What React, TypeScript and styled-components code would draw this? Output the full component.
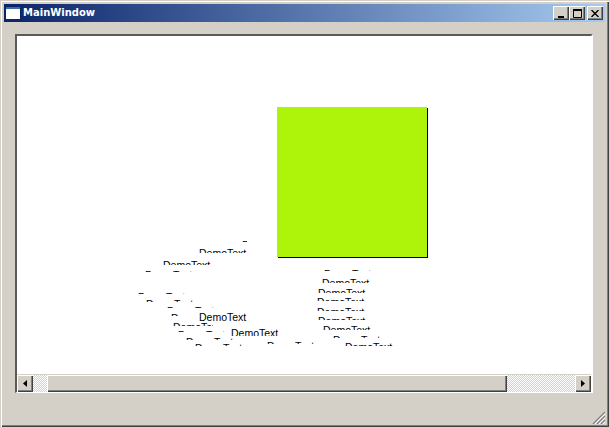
import * as React from 'react'
import styled, { createGlobalStyle } from 'styled-components'

const GlobalStyle = createGlobalStyle`
  html, body {
    margin: 0;
    padding: 0;
    background: #d4d0c8;
  }
`

interface Label {
  x: number
  y: number
  rows: number
  w?: number
}

// x, y = page position of the top of the capitals, rows = how much of the glyphs is left visible
const labels: Label[] = [
  { x: 242, y: 241, rows: 1, w: 5 },
  { x: 199, y: 249, rows: 4 },
  { x: 163, y: 261, rows: 4 },
  { x: 145, y: 271, rows: 1 },
  { x: 138, y: 293, rows: 1 },
  { x: 146, y: 300, rows: 2 },
  { x: 167, y: 307, rows: 1 },
  { x: 171, y: 314, rows: 2 },
  { x: 173, y: 323, rows: 3, w: 40 },
  { x: 199, y: 313, rows: 10 },
  { x: 178, y: 331, rows: 1 },
  { x: 231, y: 329, rows: 7 },
  { x: 186, y: 338, rows: 2 },
  { x: 195, y: 344, rows: 2 },
  { x: 267, y: 342, rows: 2 },
  { x: 324, y: 270, rows: 1 },
  { x: 322, y: 279, rows: 4 },
  { x: 318, y: 289, rows: 4 },
  { x: 317, y: 298, rows: 3 },
  { x: 317, y: 308, rows: 3 },
  { x: 318, y: 317, rows: 3 },
  { x: 323, y: 326, rows: 4 },
  { x: 333, y: 336, rows: 2 },
  { x: 345, y: 343, rows: 3 },
]

const Desktop = styled.div`
  width: 609px;
  height: 427px;
  box-sizing: border-box;
  display: flex;
  flex-direction: column;
  padding: 4px 4px 3px 4px;
  background: #d4d0c8;
  box-shadow: inset 1px 1px 0 #d4d0c8, inset 2px 2px 0 #fff, inset -1px -1px 0 #404040, inset -2px -2px 0 #808080;
  overflow: hidden;
`

const TitleBar = styled.div`
  height: 18px;
  flex: none;
  display: flex;
  align-items: center;
  padding: 0 2px 0 1px;
  background: linear-gradient(90deg, #0a246a 0%, #a6caf0 100%);
`

const AppIcon = styled.svg`
  width: 16px;
  height: 16px;
  flex: none;
  margin-right: 2px;
`

const Title = styled.span`
  flex: 1;
  font: bold 10px "DejaVu Sans", sans-serif;
  color: #fff;
  line-height: 18px;
`

const CaptionButton = styled.button<{ $gap?: number }>`
  width: 16px;
  height: 14px;
  padding: 0;
  margin-left: ${p => p.$gap ?? 0}px;
  background: #d4d0c8;
  border: 0;
  box-shadow: inset 1px 1px 0 #fff, inset -1px -1px 0 #404040, inset -2px -2px 0 #808080;
  display: flex;
  align-items: center;
  justify-content: center;
`

const ScrollArea = styled.div`
  margin: 12px 0 0 11px;
  width: 578px;
  height: 359px;
  flex: none;
  box-sizing: border-box;
  display: flex;
  flex-direction: column;
  background: #fff;
  border-top: 2px solid #5a5a5a;
  border-left: 2px solid #5a5a5a;
  border-right: 2px solid #fff;
  border-bottom: 1px solid #fff;
`

const Canvas = styled.div`
  position: relative;
  flex: 1;
  overflow: hidden;
`

const Square = styled.div`
  position: absolute;
  left: 260px;
  top: 71px;
  width: 150px;
  height: 150px;
  background: #aef40a;
  box-shadow: 1px 1px 0 #000;
`

const Clip = styled.div`
  position: absolute;
  overflow: hidden;
  background: #fff;
`

const DemoText = styled.span`
  display: block;
  margin-top: -3px;
  font: 10.5px/14px "Liberation Sans", Arial, sans-serif;
  color: #000;
  white-space: nowrap;
`

const ScrollBar = styled.div`
  height: 17px;
  flex: none;
  display: flex;
  border-top: 1px solid #d4d0c8;
  background-color: #fff;
  background-image: conic-gradient(#d4d0c8 25%, #fff 0 50%, #d4d0c8 0 75%, #fff 0);
  background-size: 2px 2px;
`

const ArrowButton = styled.div`
  width: 16px;
  flex: none;
  background: #d4d0c8;
  box-shadow: inset 1px 1px 0 #fff, inset -1px -1px 0 #404040, inset -2px -2px 0 #808080;
  display: flex;
  align-items: center;
  justify-content: center;
`

const Thumb = styled.div`
  width: 460px;
  margin-left: 14px;
  flex: none;
  background: #d4d0c8;
  box-shadow: inset 1px 1px 0 #fff, inset -1px -1px 0 #404040, inset -2px -2px 0 #808080;
`

const Track = styled.div`
  flex: 1;
`

const StatusBar = styled.div`
  flex: 1;
  display: flex;
  justify-content: flex-end;
  align-items: flex-end;
`

const Grip = styled.svg`
  width: 13px;
  height: 13px;
  display: block;
`

export default function App() {
  return (
    <>
      <GlobalStyle />
      <Desktop>
        <TitleBar>
          <AppIcon viewBox="0 0 16 16">
            <rect x="0" y="1" width="16" height="14" fill="#0a246a" />
            <rect x="1" y="2" width="14" height="2" fill="#3a6ea5" />
            <rect x="1" y="4" width="14" height="10" fill="#fff" />
          </AppIcon>
          <Title>MainWindow</Title>
          <CaptionButton>
            <svg width="8" height="9" viewBox="0 0 8 9"><rect x="1" y="7" width="6" height="2" fill="#000" /></svg>
          </CaptionButton>
          <CaptionButton>
            <svg width="9" height="9" viewBox="0 0 9 9"><path d="M0.5 1.5H8.5V8.5H0.5Z" fill="none" stroke="#000" /><rect x="0" y="0" width="9" height="2" fill="#000" /></svg>
          </CaptionButton>
          <CaptionButton $gap={2}>
            <svg width="8" height="7" viewBox="0 0 8 7"><path d="M0.5 0L7.5 7M7.5 0L0.5 7" stroke="#000" strokeWidth="1.4" /></svg>
          </CaptionButton>
        </TitleBar>
        <ScrollArea>
          <Canvas>
            <Square />
            {labels.map((l, i) => (
              <Clip key={i} style={{ left: l.x - 17, top: l.y - 36, width: l.w ?? 48, height: l.rows }}>
                <DemoText>DemoText</DemoText>
              </Clip>
            ))}
          </Canvas>
          <ScrollBar>
            <ArrowButton>
              <svg width="4" height="7" viewBox="0 0 4 7"><path d="M4 0V7L0 3.5Z" fill="#000" /></svg>
            </ArrowButton>
            <Thumb />
            <Track />
            <ArrowButton>
              <svg width="4" height="7" viewBox="0 0 4 7"><path d="M0 0V7L4 3.5Z" fill="#000" /></svg>
            </ArrowButton>
          </ScrollBar>
        </ScrollArea>
        <StatusBar>
          <Grip viewBox="0 0 13 13">
            <path d="M13 1L1 13M13 5L5 13M13 9L9 13" stroke="#808080" strokeWidth="1.2" />
            <path d="M13 3L3 13M13 7L7 13M13 11L11 13" stroke="#fff" strokeWidth="1" />
          </Grip>
        </StatusBar>
      </Desktop>
    </>
  )
}
